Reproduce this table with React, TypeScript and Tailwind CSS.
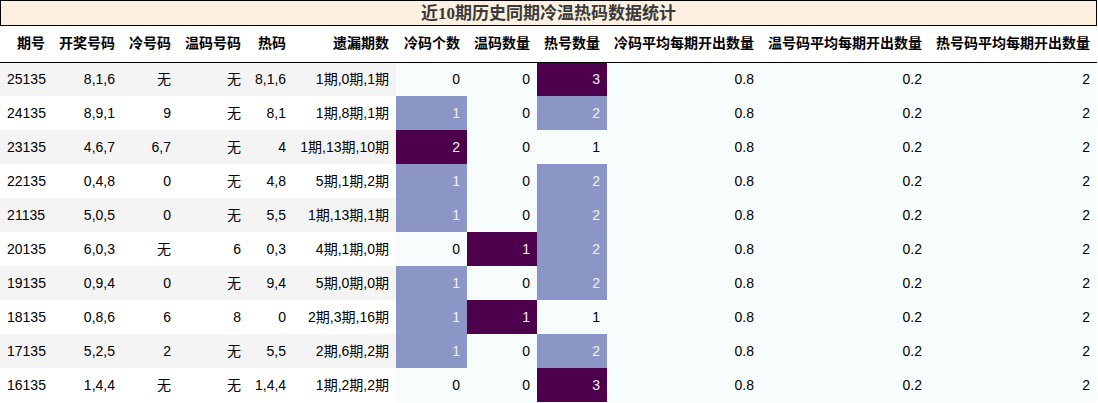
import React from "react"

type Row = [string, string, string, string, string, string, number, number, number]

const rows: Row[] = [
  ["25135", "8,1,6", "无", "无", "8,1,6", "1期,0期,1期", 0, 0, 3],
  ["24135", "8,9,1", "9", "无", "8,1", "1期,8期,1期", 1, 0, 2],
  ["23135", "4,6,7", "6,7", "无", "4", "1期,13期,10期", 2, 0, 1],
  ["22135", "0,4,8", "0", "无", "4,8", "5期,1期,2期", 1, 0, 2],
  ["21135", "5,0,5", "0", "无", "5,5", "1期,13期,1期", 1, 0, 2],
  ["20135", "6,0,3", "无", "6", "0,3", "4期,1期,0期", 0, 1, 2],
  ["19135", "0,9,4", "0", "无", "9,4", "5期,0期,0期", 1, 0, 2],
  ["18135", "0,8,6", "6", "8", "0", "2期,3期,16期", 1, 1, 1],
  ["17135", "5,2,5", "2", "无", "5,5", "2期,6期,2期", 1, 0, 2],
  ["16135", "1,4,4", "无", "无", "1,4,4", "1期,2期,2期", 0, 0, 3],
]

const headers = [
  { label: "期号", w: "w-[52px]" },
  { label: "开奖号码", w: "w-[70px]" },
  { label: "冷号码", w: "w-[56px]" },
  { label: "温码号码", w: "w-[70px]" },
  { label: "热码", w: "w-[45px]" },
  { label: "遗漏期数", w: "w-[103px]" },
  { label: "冷码个数", w: "w-[71px]" },
  { label: "温码数量", w: "w-[70px]" },
  { label: "热号数量", w: "w-[70px]" },
  { label: "冷码平均每期开出数量", w: "w-[154px]" },
  { label: "温号码平均每期开出数量", w: "w-[168px]" },
  { label: "热号码平均每期开出数量", w: "w-[168px]" },
]

// BuPu gradient, per column: min light, middle blue, max deep purple
function shade(v: number, col: number) {
  const vals = rows.map(r => r[col] as number)
  const lo = Math.min(...vals), hi = Math.max(...vals)
  const t = hi === lo ? 0 : (v - lo) / (hi - lo)
  if (t >= 0.99) return "bg-[#4d004b] text-[#f1f1f1]"
  if (t >= 0.49) return "bg-[#8c96c6] text-[#f1f1f1]"
  return "bg-[#f7fcfd] text-black"
}

const cell = "px-[7px] text-right whitespace-nowrap font-normal"

export default function App() {
  return (
    <div className="w-[1098px] bg-white" style={{ fontFamily: '"Liberation Sans", "Noto Sans CJK SC", sans-serif' }}>
      <div
        className="h-[26px] w-[1097px] border border-black bg-[#fdf0e1] flex items-center justify-center text-[17px] font-bold text-[#3a3a3a] leading-none"
        style={{ fontFamily: '"Liberation Serif", "Noto Sans CJK SC", serif' }}
      >
        近10期历史同期冷温热码数据统计
      </div>
      <table className="border-collapse table-fixed w-[1097px] text-[14px] text-black">
        <thead>
          <tr className="h-[36px] border-b border-black">
            {headers.map(h => (
              <th key={h.label} className={`${h.w} px-[7px] text-right whitespace-nowrap font-bold`}>{h.label}</th>
            ))}
          </tr>
        </thead>
        <tbody>
          {rows.map((r, i) => (
            <tr key={r[0]} className={`h-[34px] ${i % 2 === 0 ? "bg-[#f4f4f4]" : "bg-white"}`}>
              {r.slice(0, 6).map((v, j) => (
                <td key={j} className={cell}>{v}</td>
              ))}
              {[6, 7, 8].map(c => (
                <td key={c} className={`${cell} ${shade(r[c] as number, c)}`}>{r[c]}</td>
              ))}
              <td className={`${cell} bg-[#f7fcfd]`}>0.8</td>
              <td className={`${cell} bg-[#f7fcfd]`}>0.2</td>
              <td className={`${cell} bg-[#f7fcfd]`}>2</td>
            </tr>
          ))}
        </tbody>
      </table>
    </div>
  )
}
